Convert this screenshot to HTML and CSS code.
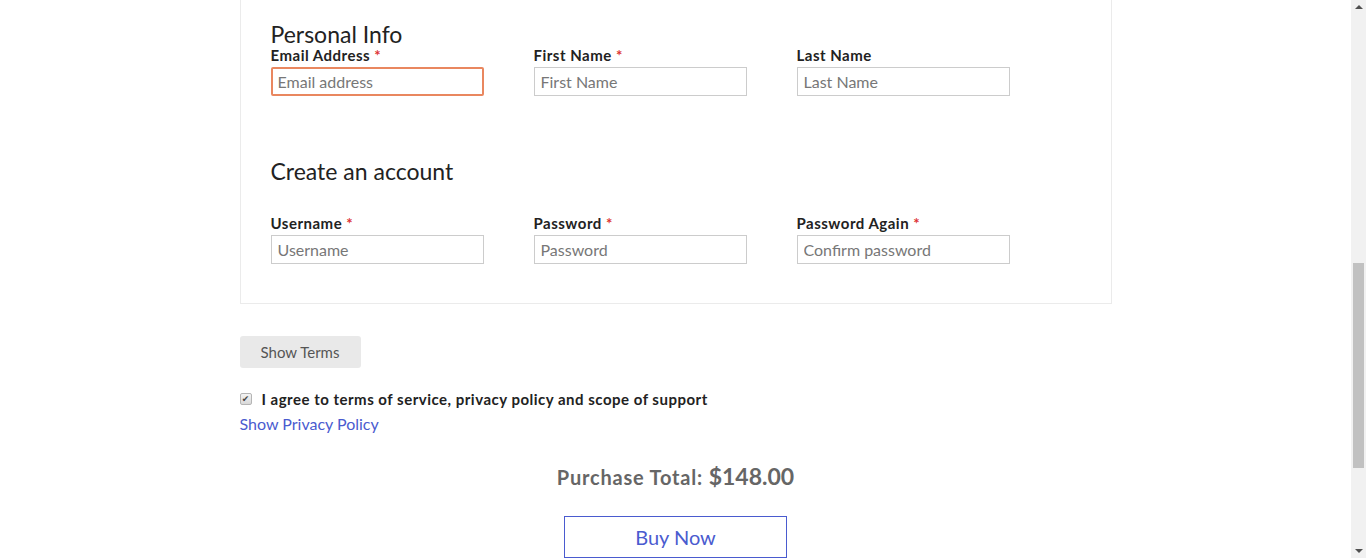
FILE: index.html
```html
<!DOCTYPE html>
<html lang="en">
<head>
<meta charset="utf-8">
<title>Checkout</title>
<link rel="stylesheet" href="styles.css">
</head>
<body>
<div class="page">
  <div class="container">
    <section class="card">
      <h2 class="section-title first">Personal Info</h2>
      <div class="row">
        <div class="field">
          <label class="label">Email Address <span class="req">*</span></label>
          <input class="input focused" type="text" placeholder="Email address">
        </div>
        <div class="field">
          <label class="label">First Name <span class="req">*</span></label>
          <input class="input" type="text" placeholder="First Name">
        </div>
        <div class="field">
          <label class="label">Last Name</label>
          <input class="input" type="text" placeholder="Last Name">
        </div>
      </div>
      <h2 class="section-title second">Create an account</h2>
      <div class="row">
        <div class="field">
          <label class="label">Username <span class="req">*</span></label>
          <input class="input" type="text" placeholder="Username">
        </div>
        <div class="field">
          <label class="label">Password <span class="req">*</span></label>
          <input class="input" type="password" placeholder="Password">
        </div>
        <div class="field">
          <label class="label">Password Again <span class="req">*</span></label>
          <input class="input" type="password" placeholder="Confirm password">
        </div>
      </div>
    </section>
    <button class="terms-btn" type="button">Show Terms</button>
    <label class="agree"><span class="check" aria-hidden="true">&#10004;</span><span>I agree to terms of service, privacy policy and scope of support</span></label>
    <a class="privacy" href="#">Show Privacy Policy</a>
    <div class="total">Purchase Total: <span class="amount">$148.00</span></div>
    <div class="buy-wrap"><button class="buy" type="button">Buy Now</button></div>
  </div>
</div>
<div class="scrollbar">
  <div class="arrow up"></div>
  <div class="track"><div class="thumb"></div></div>
  <div class="arrow down"></div>
</div>
</body>
</html>
```
FILE: styles.css
```css
html, body {
  margin: 0;
  height: 100%;
  overflow: hidden;
}
body {
  display: flex;
  font-family: "Lato", "Open Sans", sans-serif;
  color: #222;
  background: #fff;
}
.page {
  flex: 1;
  min-width: 0;
}
.container {
  width: 872px;
  margin: 0 auto;
}
.card {
  border: 1px solid #ebebeb;
  border-top: 0;
  padding: 0 30px 39px 30px;
}
.section-title {
  font-weight: 400;
  font-size: 23px;
  line-height: 26px;
  margin: 0;
  color: #222;
}
.section-title.first {
  padding-top: 21px;
  margin-bottom: 1px;
}
.section-title.second {
  margin-top: 62px;
  margin-bottom: 32px;
}
.row {
  display: flex;
  gap: 50px;
}
.field {
  width: 213px;
  display: flex;
  flex-direction: column;
}
.label {
  font-weight: 700;
  font-size: 15px;
  letter-spacing: 0.5px;
  line-height: 15px;
  color: #222;
  margin-bottom: 4px;
}
.req {
  color: #d33;
}
.input {
  box-sizing: border-box;
  width: 213px;
  height: 29px;
  border: 1px solid #ccc;
  border-radius: 0;
  padding: 0 6px 1px 6px;
  font-family: inherit;
  font-size: 16px;
  color: #333;
  margin: 0;
  outline: none;
}
.input::placeholder {
  color: #777;
}
.input.focused {
  border: 2px solid #e9875f;
  border-radius: 2px;
  padding: 0 5px 1px 5px;
}
.terms-btn {
  display: block;
  margin-top: 32px;
  height: 32px;
  width: 121px;
  border: 0;
  border-radius: 3px;
  background: #e9e9e9;
  color: #555;
  font-family: inherit;
  font-size: 15px;
  padding: 0;
}
.agree {
  display: flex;
  align-items: center;
  margin-top: 22px;
  font-weight: 700;
  font-size: 15px;
  letter-spacing: 0.5px;
  line-height: 18px;
  color: #222;
}
.check {
  box-sizing: border-box;
  width: 12px;
  height: 12px;
  margin: 0 10px 0 0;
  border: 1px solid #b5b5b5;
  border-radius: 2px;
  background: linear-gradient(#f4f4f4, #d9d9d9);
  color: #444;
  font-size: 9px;
  line-height: 10px;
  letter-spacing: 0;
  text-align: center;
  font-family: "DejaVu Sans", sans-serif;
  flex: none;
}
.privacy {
  display: block;
  font-size: 16px;
  line-height: 20px;
  margin-top: 6px;
  color: #4a5bcf;
  text-decoration: none;
}
.total {
  text-align: center;
  margin-top: 29px;
  font-weight: 700;
  font-size: 20px;
  letter-spacing: 0.8px;
  line-height: 26px;
  color: #666;
}
.amount {
  font-size: 23px;
  letter-spacing: 0;
}
.buy-wrap {
  display: flex;
  justify-content: center;
  margin-top: 26px;
}
.buy {
  width: 223px;
  height: 42px;
  background: #fff;
  border: 1px solid #4a5bcf;
  color: #4a5bcf;
  font-family: inherit;
  font-size: 20px;
  padding: 0;
}
.scrollbar {
  width: 15px;
  flex: none;
  background: #f1f1f1;
  display: flex;
  flex-direction: column;
}
.arrow {
  height: 15px;
  flex: none;
  position: relative;
}
.arrow::after {
  content: "";
  position: absolute;
  left: 4px;
  width: 0;
  height: 0;
  border-left: 4px solid transparent;
  border-right: 4px solid transparent;
}
.arrow.up::after {
  top: 5px;
  border-bottom: 4px solid #505050;
}
.arrow.down::after {
  top: 6px;
  border-top: 4px solid #505050;
}
.track {
  flex: 1;
  padding-top: 248px;
}
.thumb {
  margin: 0 2px;
  height: 205px;
  background: #c1c1c1;
}
```
